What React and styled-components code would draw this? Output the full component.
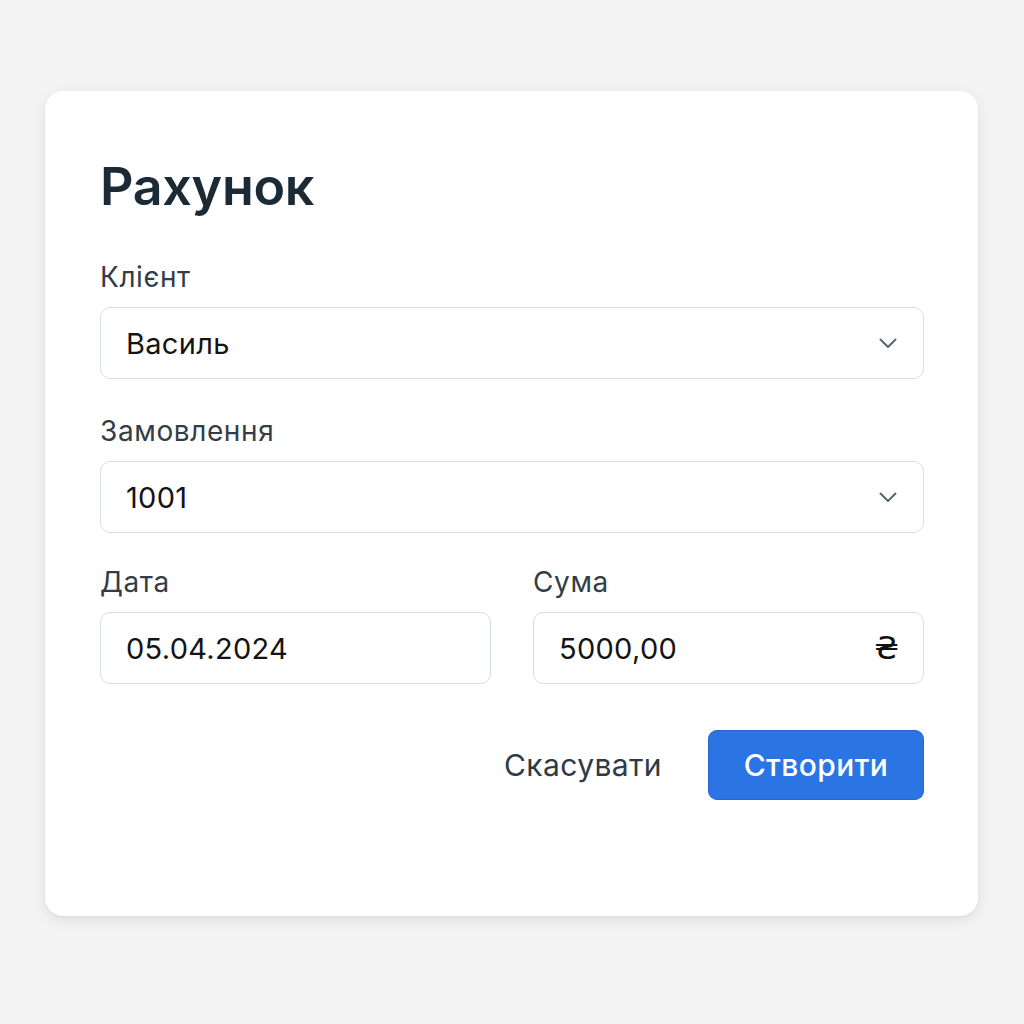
import styled, { createGlobalStyle } from "styled-components";

const GlobalStyle = createGlobalStyle`
  html, body {
    margin: 0;
    padding: 0;
    background: #f3f3f3;
    font-family: Inter, "Noto Sans", sans-serif;
  }
  * { box-sizing: border-box; }
`;

function Chevron() {
  return (
    <svg width="22" height="22" viewBox="0 0 22 22" fill="none">
      <path d="M3.5 7.5l7.5 7.5 7.5-7.5" stroke="#5b6670" strokeWidth="2" strokeLinecap="round" strokeLinejoin="round" />
    </svg>
  );
}

export default function App() {
  return (
    <Page>
      <GlobalStyle />
      <Card>
        <Title>Рахунок</Title>

        <Field>
          <Label>Клієнт</Label>
          <Box>
            <Value>Василь</Value>
            <Chevron />
          </Box>
        </Field>

        <Field>
          <Label>Замовлення</Label>
          <Box>
            <Value>1001</Value>
            <Chevron />
          </Box>
        </Field>

        <Row>
          <Field>
            <Label>Дата</Label>
            <Box>
              <Value>05.04.2024</Value>
            </Box>
          </Field>
          <Field>
            <Label>Сума</Label>
            <Box>
              <Value>5000,00</Value>
              <Currency>₴</Currency>
            </Box>
          </Field>
        </Row>

        <Actions>
          <Ghost type="button">Скасувати</Ghost>
          <Primary type="button">Створити</Primary>
        </Actions>
      </Card>
    </Page>
  );
}

const Page = styled.div`
  width: 1024px;
  height: 1024px;
  padding: 91px 46px 0 45px;
`;

const Card = styled.div`
  background: #fff;
  border-radius: 18px;
  box-shadow: 0 4px 14px rgba(0, 0, 0, 0.08), 0 1px 3px rgba(0, 0, 0, 0.05);
  height: 825px;
  padding: 56px 54px 0 55px;
  display: flex;
  flex-direction: column;
`;

const Title = styled.h1`
  margin: 0 0 34px;
  font-size: 52px;
  font-weight: 600;
  line-height: 80px;
  color: #1b2a35;
  letter-spacing: -0.3px;
`;

const Field = styled.div`
  display: flex;
  flex-direction: column;
  margin-bottom: 36px;
`;

const Label = styled.div`
  font-size: 28px;
  line-height: 32px;
  color: #333d47;
  letter-spacing: 0.6px;
  margin-bottom: 14px;
`;

const Box = styled.div`
  height: 72px;
  border: 1.5px solid #d9dee3;
  border-radius: 10px;
  display: flex;
  align-items: center;
  justify-content: space-between;
  padding: 0 24px 0 25px;
`;

const Value = styled.span`
  font-size: 29px;
  color: #141414;
  letter-spacing: 0.3px;
`;

const Currency = styled.span`
  font-family: "DejaVu Sans", sans-serif;
  font-size: 32px;
  color: #111;
`;

const Row = styled.div`
  display: grid;
  grid-template-columns: 1fr 1fr;
  gap: 42px;
  margin-top: -3px;
  & > ${Field} {
    margin-bottom: 0;
  }
`;

const Actions = styled.div`
  display: flex;
  justify-content: flex-end;
  align-items: center;
  gap: 46px;
  margin-top: 46px;
`;

const Ghost = styled.button`
  background: none;
  border: none;
  padding: 0;
  font-family: inherit;
  font-size: 30px;
  letter-spacing: 0.4px;
  color: #2e3a45;
  cursor: pointer;
`;

const Primary = styled.button`
  width: 216px;
  height: 70px;
  background: #2a74e3;
  color: #fff;
  border: 1px solid #2466cc;
  border-radius: 9px;
  font-family: inherit;
  font-size: 30px;
  font-weight: 500;
  letter-spacing: 0.4px;
  cursor: pointer;
`;
